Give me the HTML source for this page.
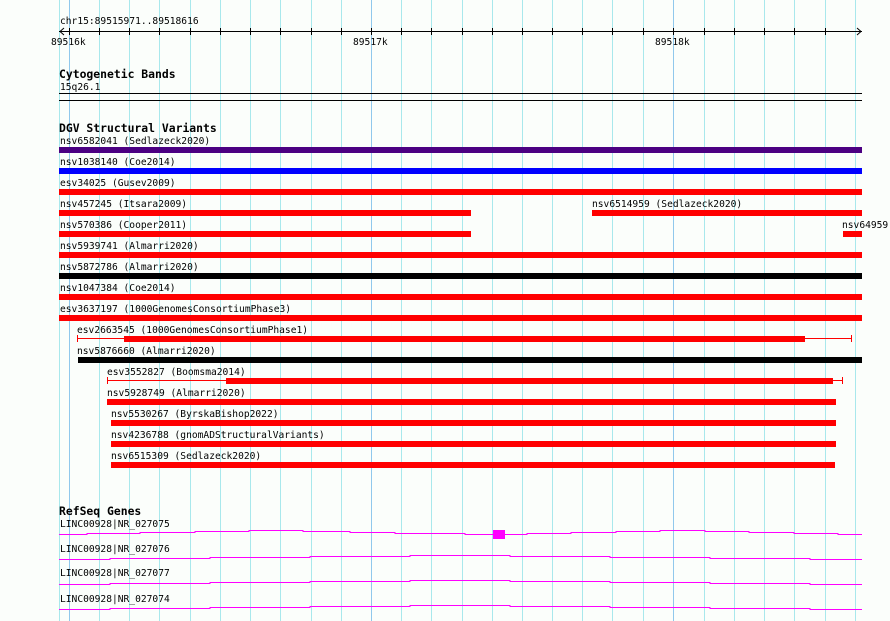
<!DOCTYPE html>
<html><head><meta charset="utf-8"><style>
html,body{margin:0;padding:0;background:#fbfefb;}
svg{display:block;}
text{font-family:"DejaVu Sans Mono","Liberation Mono",monospace;font-size:9.6px;fill:#000;}
.b{font-weight:bold;font-size:11.4px;}
</style></head><body>
<svg width="890" height="621" xmlns="http://www.w3.org/2000/svg">
<rect width="890" height="621" fill="#fbfefb"/>
<g stroke="#a8e8ec" stroke-width="1">
<line x1="59.5" y1="0" x2="59.5" y2="621"/>
<line x1="99.5" y1="0" x2="99.5" y2="621"/>
<line x1="129.5" y1="0" x2="129.5" y2="621"/>
<line x1="159.5" y1="0" x2="159.5" y2="621"/>
<line x1="190.5" y1="0" x2="190.5" y2="621"/>
<line x1="220.5" y1="0" x2="220.5" y2="621"/>
<line x1="250.5" y1="0" x2="250.5" y2="621"/>
<line x1="280.5" y1="0" x2="280.5" y2="621"/>
<line x1="311.5" y1="0" x2="311.5" y2="621"/>
<line x1="341.5" y1="0" x2="341.5" y2="621"/>
<line x1="401.5" y1="0" x2="401.5" y2="621"/>
<line x1="431.5" y1="0" x2="431.5" y2="621"/>
<line x1="462.5" y1="0" x2="462.5" y2="621"/>
<line x1="492.5" y1="0" x2="492.5" y2="621"/>
<line x1="522.5" y1="0" x2="522.5" y2="621"/>
<line x1="552.5" y1="0" x2="552.5" y2="621"/>
<line x1="582.5" y1="0" x2="582.5" y2="621"/>
<line x1="612.5" y1="0" x2="612.5" y2="621"/>
<line x1="643.5" y1="0" x2="643.5" y2="621"/>
<line x1="704.5" y1="0" x2="704.5" y2="621"/>
<line x1="734.5" y1="0" x2="734.5" y2="621"/>
<line x1="764.5" y1="0" x2="764.5" y2="621"/>
<line x1="794.5" y1="0" x2="794.5" y2="621"/>
<line x1="825.5" y1="0" x2="825.5" y2="621"/>
<line x1="855.5" y1="0" x2="855.5" y2="621"/>
</g>
<g stroke="#90c8ec" stroke-width="1">
<line x1="69.5" y1="0" x2="69.5" y2="621"/>
<line x1="371.5" y1="0" x2="371.5" y2="621"/>
<line x1="673.5" y1="0" x2="673.5" y2="621"/>
</g>
<text x="60" y="24">chr15:89515971..89518616</text>
<g stroke="#000" stroke-width="1">
<line x1="59" y1="31.5" x2="862" y2="31.5"/>
<polyline points="64,28 60,31.5 64,35" fill="none"/>
<polyline points="857,28 861,31.5 857,35" fill="none"/>
</g>
<g stroke="#000">
<line x1="69.5" y1="28" x2="69.5" y2="35"/><line x1="99.5" y1="28" x2="99.5" y2="35"/><line x1="129.5" y1="28" x2="129.5" y2="35"/><line x1="159.5" y1="28" x2="159.5" y2="35"/><line x1="190.5" y1="28" x2="190.5" y2="35"/><line x1="220.5" y1="28" x2="220.5" y2="35"/><line x1="250.5" y1="28" x2="250.5" y2="35"/><line x1="280.5" y1="28" x2="280.5" y2="35"/><line x1="311.5" y1="28" x2="311.5" y2="35"/><line x1="341.5" y1="28" x2="341.5" y2="35"/><line x1="371.5" y1="28" x2="371.5" y2="35"/><line x1="401.5" y1="28" x2="401.5" y2="35"/><line x1="431.5" y1="28" x2="431.5" y2="35"/><line x1="462.5" y1="28" x2="462.5" y2="35"/><line x1="492.5" y1="28" x2="492.5" y2="35"/><line x1="522.5" y1="28" x2="522.5" y2="35"/><line x1="552.5" y1="28" x2="552.5" y2="35"/><line x1="582.5" y1="28" x2="582.5" y2="35"/><line x1="612.5" y1="28" x2="612.5" y2="35"/><line x1="643.5" y1="28" x2="643.5" y2="35"/><line x1="673.5" y1="28" x2="673.5" y2="35"/><line x1="704.5" y1="28" x2="704.5" y2="35"/><line x1="734.5" y1="28" x2="734.5" y2="35"/><line x1="764.5" y1="28" x2="764.5" y2="35"/><line x1="794.5" y1="28" x2="794.5" y2="35"/><line x1="825.5" y1="28" x2="825.5" y2="35"/>
</g>
<text x="51" y="45">89516k</text>
<text x="353" y="45">89517k</text>
<text x="655" y="45">89518k</text>

<text class="b" x="59" y="78">Cytogenetic Bands</text>
<text x="60" y="90">15q26.1</text>
<line x1="59" y1="93.5" x2="862" y2="93.5" stroke="#000"/>
<line x1="59" y1="100.5" x2="862" y2="100.5" stroke="#000"/>

<text class="b" x="59" y="132">DGV Structural Variants</text>
<text x="60" y="144">nsv6582041 (Sedlazeck2020)</text>
<rect x="59" y="147" width="803" height="6" fill="#4b0082"/>
<text x="60" y="165">nsv1038140 (Coe2014)</text>
<rect x="59" y="168" width="803" height="6" fill="#0000ff"/>
<text x="60" y="186">esv34025 (Gusev2009)</text>
<rect x="59" y="189" width="803" height="6" fill="#ff0000"/>
<text x="60" y="207">nsv457245 (Itsara2009)</text>
<rect x="59" y="210" width="412" height="6" fill="#ff0000"/>
<text x="592" y="207">nsv6514959 (Sedlazeck2020)</text>
<rect x="592" y="210" width="270" height="6" fill="#ff0000"/>
<text x="60" y="228">nsv570386 (Cooper2011)</text>
<rect x="59" y="231" width="412" height="6" fill="#ff0000"/>
<text x="842" y="228">nsv64959</text>
<rect x="843" y="231" width="19" height="6" fill="#ff0000"/>
<text x="60" y="249">nsv5939741 (Almarri2020)</text>
<rect x="59" y="252" width="803" height="6" fill="#ff0000"/>
<text x="60" y="270">nsv5872786 (Almarri2020)</text>
<rect x="59" y="273" width="803" height="6" fill="#000"/>
<text x="60" y="291">nsv1047384 (Coe2014)</text>
<rect x="59" y="294" width="803" height="6" fill="#ff0000"/>
<text x="60" y="312">esv3637197 (1000GenomesConsortiumPhase3)</text>
<rect x="59" y="315" width="803" height="6" fill="#ff0000"/>
<text x="77" y="333">esv2663545 (1000GenomesConsortiumPhase1)</text>
<rect x="77" y="338" width="775" height="1" fill="#ff0000"/>
<rect x="77" y="335" width="1" height="7" fill="#ff0000"/>
<rect x="851" y="335" width="1" height="7" fill="#ff0000"/>
<rect x="124" y="336" width="681" height="6" fill="#ff0000"/>
<text x="77" y="354">nsv5876660 (Almarri2020)</text>
<rect x="78" y="357" width="784" height="6" fill="#000"/>
<text x="107" y="375">esv3552827 (Boomsma2014)</text>
<rect x="107" y="380" width="736" height="1" fill="#ff0000"/>
<rect x="107" y="377" width="1" height="7" fill="#ff0000"/>
<rect x="842" y="377" width="1" height="7" fill="#ff0000"/>
<rect x="226" y="378" width="607" height="6" fill="#ff0000"/>
<text x="107" y="396">nsv5928749 (Almarri2020)</text>
<rect x="107" y="399" width="729" height="6" fill="#ff0000"/>
<text x="111" y="417">nsv5530267 (ByrskaBishop2022)</text>
<rect x="111" y="420" width="725" height="6" fill="#ff0000"/>
<text x="111" y="438">nsv4236788 (gnomADStructuralVariants)</text>
<rect x="111" y="441" width="725" height="6" fill="#ff0000"/>
<text x="111" y="459">nsv6515309 (Sedlazeck2020)</text>
<rect x="111" y="462" width="724" height="6" fill="#ff0000"/>

<text class="b" x="59" y="515">RefSeq Genes</text>
<text x="60" y="527">LINC00928|NR_027075</text>
<polyline fill="none" stroke="#ff00ff" stroke-width="1" points="59,534.5 87,534.5 87,533.5 140,533.5 140,532.5 195,532.5 195,531.5 249,531.5 249,530.5 303,530.5 303,531.5 350,531.5 350,532.5 395,532.5 395,533.5 465,533.5 465,534.5 527,534.5 527,533.5 571,533.5 571,532.5 616,532.5 616,531.5 660,531.5 660,530.5 705,530.5 705,531.5 749,531.5 749,532.5 794,532.5 794,533.5 838,533.5 838,534.5 862,534.5"/>
<rect x="493" y="530" width="12" height="9" fill="#ff00ff"/>
<text x="60" y="552">LINC00928|NR_027076</text>
<polyline fill="none" stroke="#ff00ff" stroke-width="1" points="59,559.5 110,559.5 110,558.5 210,558.5 210,557.5 310,557.5 310,556.5 410,556.5 410,555.5 510,555.5 510,556.5 610,556.5 610,557.5 710,557.5 710,558.5 810,558.5 810,559.5 862,559.5"/>
<text x="60" y="576">LINC00928|NR_027077</text>
<polyline fill="none" stroke="#ff00ff" stroke-width="1" points="59,584.5 110,584.5 110,583.5 210,583.5 210,582.5 310,582.5 310,581.5 410,581.5 410,580.5 510,580.5 510,581.5 610,581.5 610,582.5 710,582.5 710,583.5 810,583.5 810,584.5 862,584.5"/>
<text x="60" y="602">LINC00928|NR_027074</text>
<polyline fill="none" stroke="#ff00ff" stroke-width="1" points="59,609.5 110,609.5 110,608.5 210,608.5 210,607.5 310,607.5 310,606.5 410,606.5 410,605.5 510,605.5 510,606.5 610,606.5 610,607.5 710,607.5 710,608.5 810,608.5 810,609.5 862,609.5"/>
</svg>
</body></html>
